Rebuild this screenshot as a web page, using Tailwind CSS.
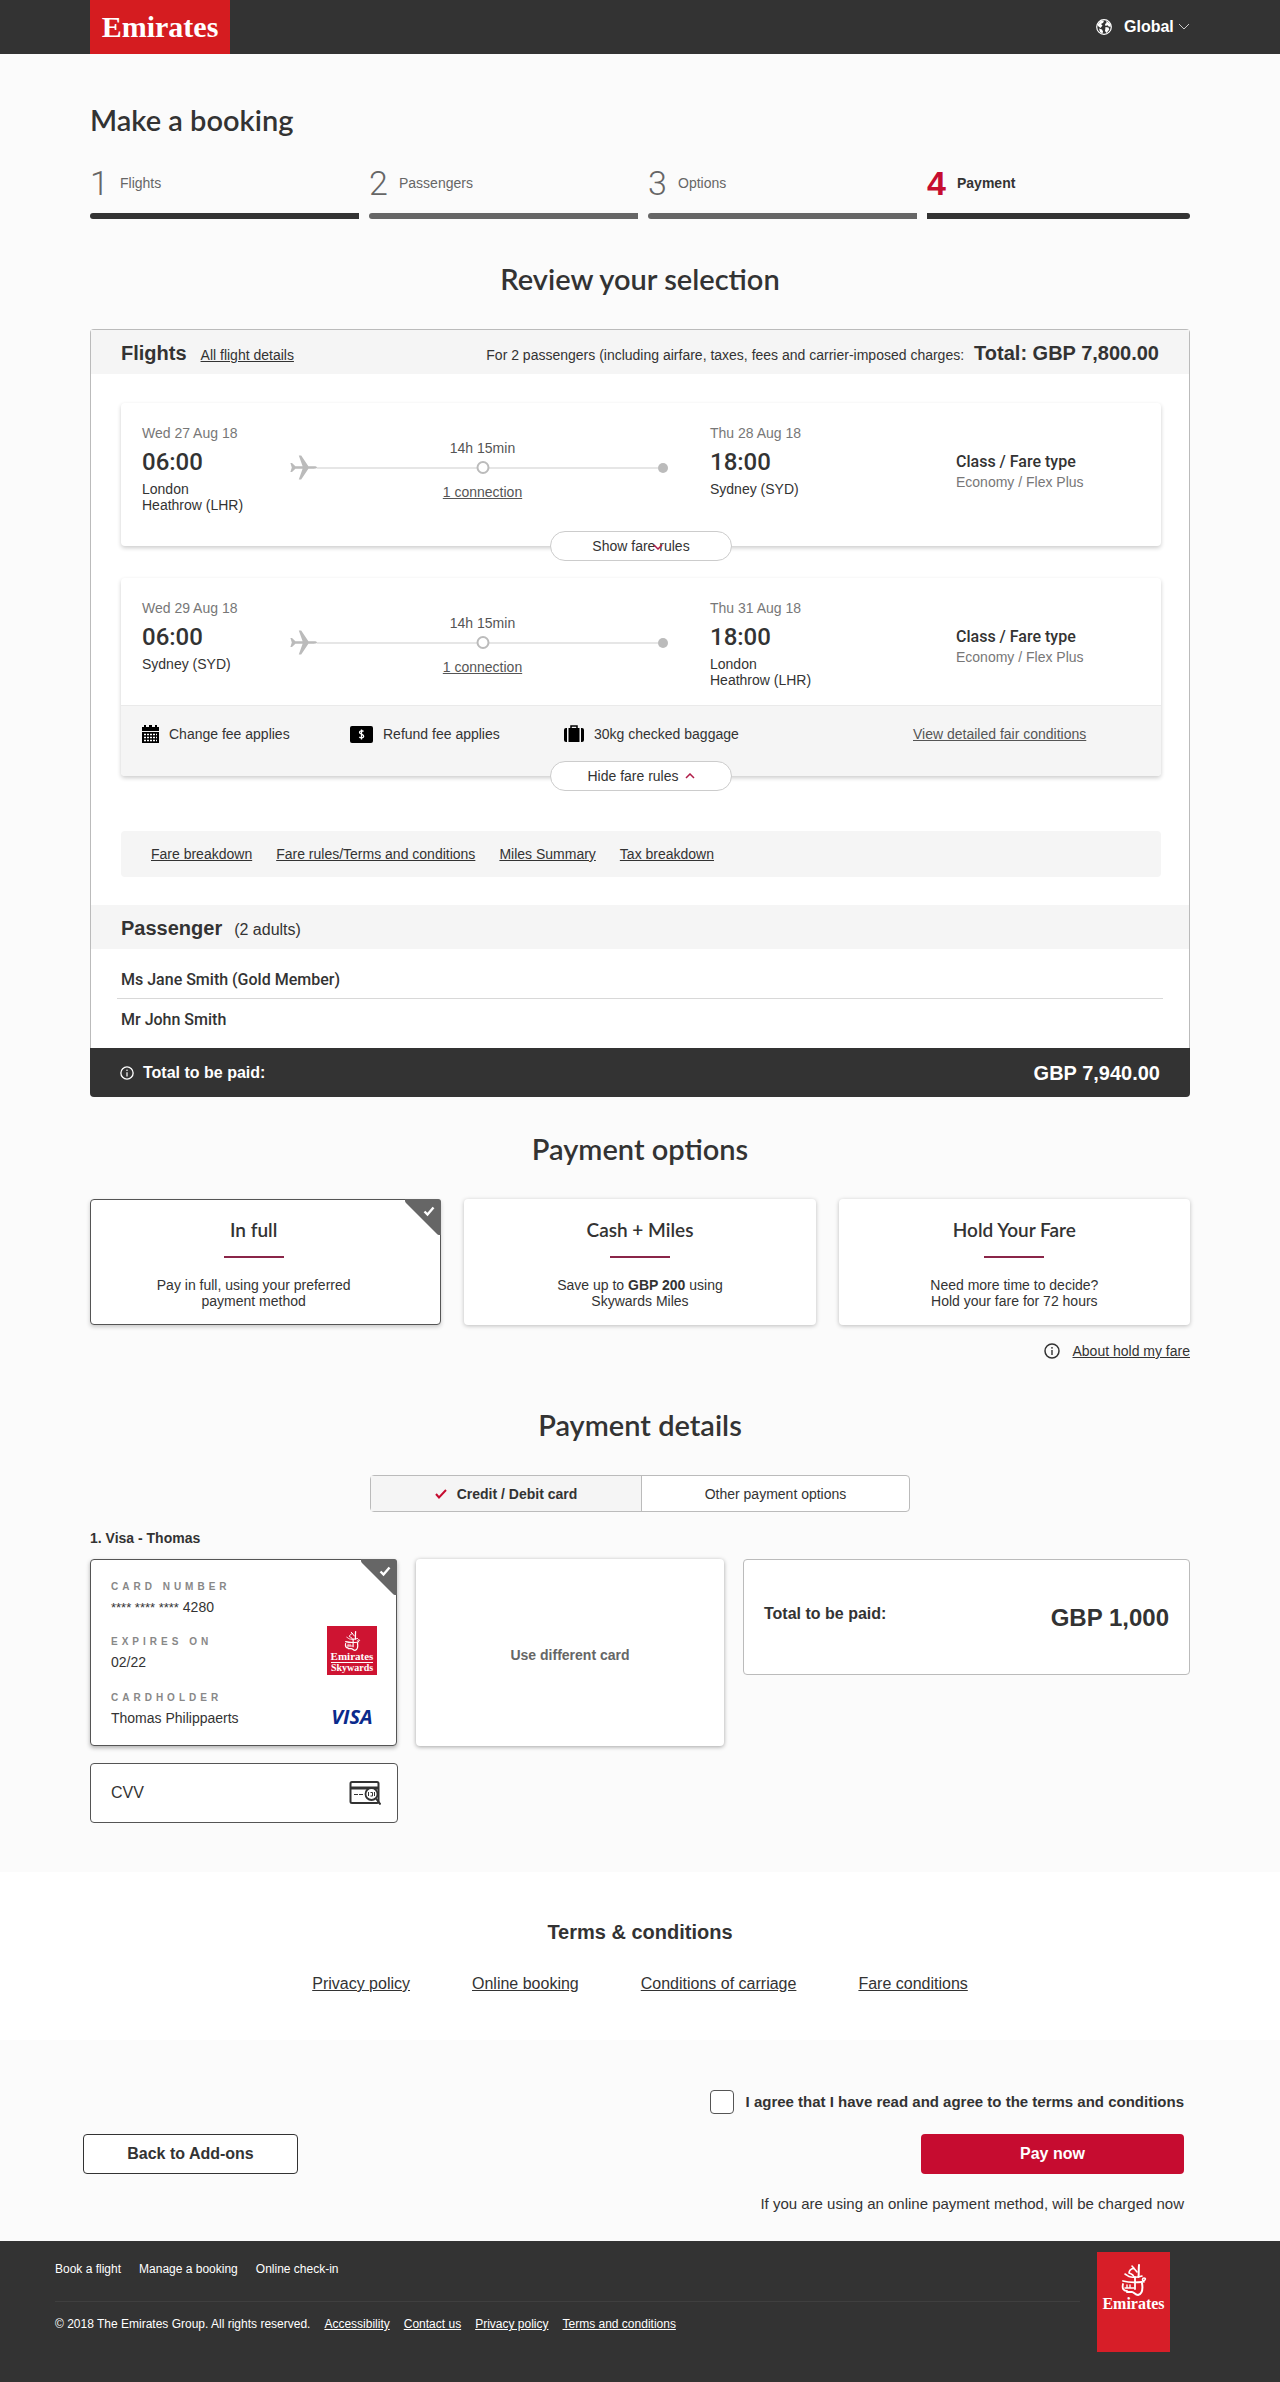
<!DOCTYPE html>
<html lang="en">

<head>
    <meta charset="UTF-8">
    <meta name="viewport" content="width=device-width, initial-scale=1.0">
    <script src="https://cdn.jsdelivr.net/npm/@tailwindcss/browser@4"></script>
    <title>Make a booking - Payment</title>
</head>

<body class="bg-[#fbfbfb] text-[#333] text-sm leading-5 font-['Liberation_Sans',Arial,sans-serif]">

    <!-- Shared icons -->
    <svg class="hidden" aria-hidden="true">
        <symbol id="icon-plane" viewBox="0 0 27 25">
            <path fill="#bbb" d="M27 12.5c0 .8-1.4 1.2-3 1.2h-5.6L11.2 24.6H8.8l3.8-10.9H5.4L2 17H.4l1.4-4.5L.4 8H2l3.4 3.3h7.2L8.8.4h2.4l7.2 10.9H24c1.6 0 3 .4 3 1.2z" />
        </symbol>
        <symbol id="icon-info" viewBox="0 0 16 16">
            <circle cx="8" cy="8" r="7" fill="none" stroke="currentColor" stroke-width="1.5" />
            <path d="M8 7v5" stroke="currentColor" stroke-width="1.4" />
            <circle cx="8" cy="4.8" r=".9" fill="currentColor" />
        </symbol>
        <symbol id="icon-corner" viewBox="0 0 36 36">
            <path fill="#666" d="M0 0h33a3 3 0 0 1 3 3v33h-2a3 3 0 0 1-2-1L1 4a3 3 0 0 1-1-2z" />
            <path d="M19.5 12.5l3 3 6-7" fill="none" stroke="#fff" stroke-width="2.4" />
        </symbol>
        <symbol id="icon-calligraphy" viewBox="0 0 26 32">
            <g fill="none" stroke="#fff" stroke-linecap="round" stroke-linejoin="round">
                <path stroke-width="2" d="M18 1c-.5 4 0 8-.5 12" />
                <path stroke-width="1.6" d="M11 2l5 6M13 4c-3 1-5 3-5 5 2 1 4 1 5 4" />
                <path stroke-width="1.6" d="M4 10c2 1 3 3 6 3 3 .5 8 0 11-1M22 17c3-1 3-3 1-3s-2 3 0 4" />
                <path stroke-width="1.8" d="M2 17c5 1.500 13 1.500 19 1M2 20c-1 4 0 7 4 7M14 13v12" />
                <path stroke-width="1.4" d="M6 21v3M9 21v3M4 24h9" />
                <path stroke-width="2" d="M6 28h5c2 0 3 3 6 3 4-1 5-6 4-12" />
            </g>
        </symbol>
    </svg>

    <!-- Header -->
    <header class="bg-[#333]">
        <div class="mx-auto max-w-[1100px] flex items-center justify-between">
            <a href="#" class="w-[140px] h-[54px] bg-[#d51c20] text-white text-[30px] leading-[54px] font-bold text-center font-['Liberation_Serif',serif]">Emirates</a>
            <div class="flex items-center gap-3 text-white">
                <svg class="size-4" viewBox="0 0 16 16" aria-hidden="true">
                    <circle cx="8" cy="8" r="7.300" fill="#333" stroke="#fff" stroke-width="1.200" />
                    <path fill="#fff" d="M2 5l3-3.500 3 .2-.8 2L5 5l1.500 1.500L4.500 9 2 7zM10 2l3.500 2L15 7.500l-2 .2-1.500-1.500L9.500 7 9 5l1.500-1zM9.500 8l3 .5.8 2-2.800 3.500-1.500-2zM3 9.500l3 1 1 2-.5 2L4 13z" />
                </svg>
                <div class="relative">
                    <select aria-label="Region" class="appearance-none bg-transparent text-white text-base font-bold leading-6 pr-4">
                        <option>Global</option>
                    </select>
                    <svg class="absolute right-0 top-2 w-3 h-2 pointer-events-none" viewBox="0 0 12 8" fill="none" stroke="#ccc" aria-hidden="true">
                        <path d="M1 1l5 5 5-5" />
                    </svg>
                </div>
            </div>
        </div>
    </header>

    <main class="mx-auto max-w-[1100px] pt-[46px] pb-[49px]">
        <h1 class="font-[Lato,sans-serif] text-[29px] leading-10 font-semibold">Make a booking</h1>

        <!-- Steps -->
        <ol class="mt-[23px] grid grid-cols-[269fr_269fr_269fr_263fr] gap-[10px] text-[#666]">
            <li>
                <div class="flex items-center h-10">
                    <span class="w-[30px] text-[34px] font-light font-[Roboto,sans-serif]">1</span>
                    <span>Flights</span>
                </div>
                <div class="mt-[10px] h-[6px] rounded-l-full bg-[#333]"></div>
            </li>
            <li>
                <div class="flex items-center h-10">
                    <span class="w-[30px] text-[34px] font-light font-[Roboto,sans-serif]">2</span>
                    <span>Passengers</span>
                </div>
                <div class="mt-[10px] h-[6px] rounded-l-full bg-[#666]"></div>
            </li>
            <li>
                <div class="flex items-center h-10">
                    <span class="w-[30px] text-[34px] font-light font-[Roboto,sans-serif]">3</span>
                    <span>Options</span>
                </div>
                <div class="mt-[10px] h-[6px] rounded-l-full bg-[#666]"></div>
            </li>
            <li class="font-bold text-[#333]" aria-current="step">
                <div class="flex items-center h-10">
                    <span class="w-[30px] text-[34px] text-[#c60c30]">4</span>
                    <span>Payment</span>
                </div>
                <div class="mt-[10px] h-[6px] rounded-r-full bg-[#333]"></div>
            </li>
        </ol>

        <h2 class="mt-10 text-center font-[Lato,sans-serif] text-[29px] leading-10 font-semibold">Review your selection</h2>

        <!-- Selection -->
        <section class="mt-[30px] bg-white border border-b-0 border-[#bbb] rounded-t-sm">
            <div class="flex items-baseline h-11 pt-[9px] px-[30px] bg-[#f5f5f5]">
                <h3 class="text-xl leading-7 font-bold">Flights</h3>
                <a href="#" class="ml-[14px] underline">All flight details</a>
                <p class="ml-auto">For 2 passengers (including airfare, taxes, fees and carrier-imposed charges:</p>
                <p class="ml-[10px] text-xl leading-7 font-bold">Total: GBP 7,800.00</p>
            </div>

            <div class="pt-[29px] pb-7 pl-[30px] pr-7">
                <!-- Outbound -->
                <article class="relative rounded-sm shadow-[0_2px_4px_rgba(0,0,0,0.2)]">
                    <div class="grid grid-cols-[148fr_420fr_246fr_205fr] pl-[21px] pt-5 pb-[33px]">
                        <div>
                            <p class="text-[#777]">Wed 27 Aug 18</p>
                            <p class="mt-[3px] text-2xl font-medium font-[Roboto,sans-serif]">06:00</p>
                            <p class="mt-[3px] leading-4">London<br>Heathrow (LHR)</p>
                        </div>
                        <div class="pt-[18px] pr-[35px] text-center">
                            <p class="leading-[14px] text-[#555]">14h 15min</p>
                            <div class="relative flex items-center pr-[7px]">
                                <svg class="w-[27px] h-[25px]" aria-hidden="true"><use href="#icon-plane" /></svg>
                                <span class="flex-1 h-[2px] bg-[#e6e6e6]"></span>
                                <span class="size-[10px] rounded-full bg-[#bbb]"></span>
                                <span class="absolute left-1/2 -translate-x-1/2 size-[13px] rounded-full border-2 border-[#bbb] bg-white"></span>
                            </div>
                            <a href="#" class="block mt-[2px] text-[#555] underline">1 connection</a>
                        </div>
                        <div>
                            <p class="text-[#777]">Thu 28 Aug 18</p>
                            <p class="mt-[3px] text-2xl font-medium font-[Roboto,sans-serif]">18:00</p>
                            <p class="mt-[3px] leading-4">Sydney (SYD)</p>
                        </div>
                        <div class="pt-[29px]">
                            <p class="text-base leading-5 font-medium font-[Roboto,sans-serif]">Class / Fare type</p>
                            <p class="text-[#777]">Economy / Flex Plus</p>
                        </div>
                    </div>
                    <button type="button" class="absolute bottom-0 left-1/2 -translate-x-1/2 translate-y-1/2 w-[182px] h-[30px] rounded-full border border-[#ccc] bg-white">
                        Show fare rules
                        <svg class="absolute left-[102px] top-3 w-[10px] h-[6px]" viewBox="0 0 10 6" fill="none" stroke="#b01c48" stroke-width="1.500" aria-hidden="true">
                            <path d="M1 1l4 4 4-4" />
                        </svg>
                    </button>
                </article>

                <!-- Return -->
                <article class="relative mt-8 rounded-sm shadow-[0_2px_4px_rgba(0,0,0,0.2)]">
                    <div class="grid grid-cols-[148fr_420fr_246fr_205fr] pl-[21px] pt-5 pb-[17px]">
                        <div>
                            <p class="text-[#777]">Wed 29 Aug 18</p>
                            <p class="mt-[3px] text-2xl font-medium font-[Roboto,sans-serif]">06:00</p>
                            <p class="mt-[3px] leading-4">Sydney (SYD)</p>
                        </div>
                        <div class="pt-[18px] pr-[35px] text-center">
                            <p class="leading-[14px] text-[#555]">14h 15min</p>
                            <div class="relative flex items-center pr-[7px]">
                                <svg class="w-[27px] h-[25px]" aria-hidden="true"><use href="#icon-plane" /></svg>
                                <span class="flex-1 h-[2px] bg-[#e6e6e6]"></span>
                                <span class="size-[10px] rounded-full bg-[#bbb]"></span>
                                <span class="absolute left-1/2 -translate-x-1/2 size-[13px] rounded-full border-2 border-[#bbb] bg-white"></span>
                            </div>
                            <a href="#" class="block mt-[2px] text-[#555] underline">1 connection</a>
                        </div>
                        <div>
                            <p class="text-[#777]">Thu 31 Aug 18</p>
                            <p class="mt-[3px] text-2xl font-medium font-[Roboto,sans-serif]">18:00</p>
                            <p class="mt-[3px] leading-4">London<br>Heathrow (LHR)</p>
                        </div>
                        <div class="pt-[29px]">
                            <p class="text-base leading-5 font-medium font-[Roboto,sans-serif]">Class / Fare type</p>
                            <p class="text-[#777]">Economy / Flex Plus</p>
                        </div>
                    </div>
                    <div class="grid grid-cols-[208fr_214fr_349fr_248fr] h-[71px] pl-[21px] pt-[18px] bg-[#f5f5f5] border-t border-[#eaeaea] rounded-b-sm">
                        <p class="flex items-center h-5 gap-[10px]">
                            <svg class="w-[17px] h-[18px]" viewBox="0 0 17 18" aria-hidden="true">
                                <path d="M0 2h2V0h2v2h3V0h3v2h3V0h2v2h2v4H0zM0 7h17v11H0z" />
                                <path stroke="#fff" d="M2 9.500h13M2 12.500h13M2 15.500h13" stroke-width="1.500" stroke-dasharray="2 1" />
                            </svg>
                            Change fee applies
                        </p>
                        <p class="flex items-center h-5 gap-[10px]">
                            <svg class="w-[23px] h-[17px]" viewBox="0 0 23 17" aria-hidden="true">
                                <rect width="23" height="17" rx="2" />
                                <path d="M13.500 5.500c-1-1.200-4-1-4 .8 0 2.200 4.200 1.600 4.200 3.900 0 2-3.200 2.200-4.400.8M11.500 3.500v10" fill="none" stroke="#fff" stroke-width="1.300" />
                            </svg>
                            Refund fee applies
                        </p>
                        <p class="flex items-center h-5 gap-[10px]">
                            <svg class="w-5 h-[18px]" viewBox="0 0 20 18" aria-hidden="true">
                                <path d="M2 3h1v14H2a2 2 0 0 1-2-2V5a2 2 0 0 1 2-2zM17 3h1a2 2 0 0 1 2 2v10a2 2 0 0 1-2 2h-1zM4.500 3h11v14h-11z" />
                                <path d="M7 3V1h6v2" fill="none" stroke="#000" stroke-width="1.500" />
                            </svg>
                            30kg checked baggage
                        </p>
                        <a href="#" class="justify-self-start self-start text-[#555] underline">View detailed fair conditions</a>
                    </div>
                    <button type="button" class="absolute bottom-0 left-1/2 -translate-x-1/2 translate-y-1/2 flex items-center justify-center gap-[6px] w-[182px] h-[30px] rounded-full border border-[#ccc] bg-white">
                        Hide fare rules
                        <svg class="w-[10px] h-[6px]" viewBox="0 0 10 6" fill="none" stroke="#b01c48" stroke-width="1.500" aria-hidden="true">
                            <path d="M1 5l4-4 4 4" />
                        </svg>
                    </button>
                </article>

                <nav class="mt-[55px] flex items-center gap-6 h-[46px] pl-[30px] rounded-sm bg-[#f5f5f5]">
                    <a href="#" class="underline">Fare breakdown</a>
                    <a href="#" class="underline">Fare rules/Terms and conditions</a>
                    <a href="#" class="underline">Miles Summary</a>
                    <a href="#" class="underline">Tax breakdown</a>
                </nav>
            </div>

            <div class="flex items-baseline gap-3 h-11 pt-[9px] pl-[30px] bg-[#f5f5f5]">
                <h3 class="text-xl leading-7 font-bold">Passenger</h3>
                <p class="text-base">(2 adults)</p>
            </div>
            <ul class="px-[26px] text-base leading-5 font-medium font-[Roboto,sans-serif]">
                <li class="pt-[21px] pb-2 px-1 border-b border-[#d8d8d8]">Ms Jane Smith (Gold Member)</li>
                <li class="pt-[11px] pb-[18px] px-1">Mr John Smith</li>
            </ul>
        </section>
        <div class="flex items-center h-[49px] px-[30px] rounded-b-sm bg-[#333] text-white font-bold">
            <svg class="size-[14px]" aria-hidden="true"><use href="#icon-info" /></svg>
            <span class="ml-[9px] text-base">Total to be paid:</span>
            <span class="ml-auto text-xl">GBP 7,940.00</span>
        </div>

        <!-- Payment options -->
        <h2 class="mt-8 text-center font-[Lato,sans-serif] text-[29px] leading-10 font-semibold">Payment options</h2>
        <div class="mt-[30px] grid grid-cols-3 gap-[23px] text-center">
            <label class="relative h-[126px] pt-[18px] pr-6 rounded-sm border border-[#555] bg-white shadow-[0_2px_4px_rgba(0,0,0,0.2)]">
                <input type="radio" name="option" class="sr-only" checked>
                <span class="block font-[Lato,sans-serif] text-[19px] leading-6 font-semibold">In full</span>
                <span class="block mx-auto mt-[14px] w-[60px] h-[2px] bg-[#8a2548]"></span>
                <span class="block mt-[19px] leading-4">Pay in full, using your preferred<br>payment method</span>
                <svg class="absolute -top-px -right-px size-9" aria-hidden="true"><use href="#icon-corner" /></svg>
            </label>
            <label class="relative h-[126px] pt-[19px] rounded-sm bg-white shadow-[0_1px_4px_rgba(0,0,0,0.25)]">
                <input type="radio" name="option" class="sr-only">
                <span class="block font-[Lato,sans-serif] text-[19px] leading-6 font-semibold">Cash + Miles</span>
                <span class="block mx-auto mt-[14px] w-[60px] h-[2px] bg-[#8a2548]"></span>
                <span class="block mt-[19px] leading-4">Save up to <b>GBP 200</b> using<br>Skywards Miles</span>
            </label>
            <label class="relative h-[126px] pt-[19px] rounded-sm bg-white shadow-[0_1px_4px_rgba(0,0,0,0.25)]">
                <input type="radio" name="option" class="sr-only">
                <span class="block font-[Lato,sans-serif] text-[19px] leading-6 font-semibold">Hold Your Fare</span>
                <span class="block mx-auto mt-[14px] w-[60px] h-[2px] bg-[#8a2548]"></span>
                <span class="block mt-[19px] leading-4">Need more time to decide?<br>Hold your fare for 72 hours</span>
            </label>
        </div>
        <div class="mt-4 flex items-center justify-end gap-3">
            <svg class="size-4" aria-hidden="true"><use href="#icon-info" /></svg>
            <a href="#" class="underline">About hold my fare</a>
        </div>

        <!-- Payment details -->
        <h2 class="mt-11 text-center font-[Lato,sans-serif] text-[29px] leading-10 font-semibold">Payment details</h2>
        <div class="mt-[30px] mx-auto w-[540px] h-[37px] grid grid-cols-[272fr_268fr] rounded-sm border border-[#bbb] bg-white">
            <button type="button" class="flex items-center justify-center gap-[10px] border-r border-[#bbb] bg-[#f5f5f5] font-bold">
                <svg class="w-3 h-[10px]" viewBox="0 0 12 10" fill="none" stroke="#c60c30" stroke-width="2" aria-hidden="true">
                    <path d="M1 5l3 3.500L11 1" />
                </svg>
                Credit / Debit card
            </button>
            <button type="button">Other payment options</button>
        </div>

        <h3 class="mt-4 font-bold">1. Visa - Thomas</h3>
        <div class="mt-[11px] grid grid-cols-[307fr_308fr_447fr] items-start gap-[19px]">
            <div class="relative flex justify-between h-[187px] pt-5 pl-5 pr-[19px] rounded border border-[#555] bg-white shadow-[0_2px_4px_rgba(0,0,0,0.3)]">
                <dl>
                    <dt class="text-[10px] leading-[14px] font-bold tracking-[4px] text-[#888]">CARD NUMBER</dt>
                    <dd class="mt-[3px]"><span class="text-[13px]">**** **** ****</span> 4280</dd>
                    <dt class="mt-[17px] text-[10px] leading-[14px] font-bold tracking-[4px] text-[#888]">EXPIRES ON</dt>
                    <dd class="mt-[3px]">02/22</dd>
                    <dt class="mt-[19px] text-[10px] leading-[14px] font-bold tracking-[4px] text-[#888]">CARDHOLDER</dt>
                    <dd class="mt-[3px]">Thomas Philippaerts</dd>
                </dl>
                <div class="pt-[46px] text-center">
                    <div class="w-[50px] h-[49px] pt-[5px] bg-[#ce1432] text-white text-[11px] leading-[10px] font-bold font-['Liberation_Serif',serif]">
                        <svg class="mx-auto w-[17px] h-5" aria-hidden="true"><use href="#icon-calligraphy" /></svg>
                        <p>Emirates</p>
                        <p class="mx-1 mt-px border-t border-white text-[10px]">Skywards</p>
                    </div>
                    <p class="mt-[30px] text-[20px] leading-6 font-bold italic text-[#0a2a8c] font-['Open_Sans',sans-serif]">VISA</p>
                </div>
                <svg class="absolute -top-px -right-px size-9" aria-hidden="true"><use href="#icon-corner" /></svg>
            </div>
            <button type="button" class="h-[187px] pt-1 rounded bg-white font-bold text-[#666] shadow-[0_1px_4px_rgba(0,0,0,0.35)]">Use different card</button>
            <div class="flex justify-between h-[116px] pt-[42px] px-5 rounded border border-[#bbb] bg-white font-bold">
                <p class="text-base">Total to be paid:</p>
                <p class="text-2xl">GBP 1,000</p>
            </div>
        </div>
        <div class="mt-[17px] w-[308px] h-[60px] flex items-center gap-3 pl-5 pr-4 rounded-sm border border-[#555] bg-white">
            <label for="cvv" class="text-base">CVV</label>
            <input id="cvv" type="text" class="flex-1 min-w-0 h-full text-base outline-none">
            <svg class="w-8 h-6" viewBox="0 0 32 24" fill="none" stroke="#333" aria-hidden="true">
                <rect x="1.500" y="1" width="28" height="21" rx="1.500" stroke-width="2" />
                <path stroke-width="3" d="M2 7h27" />
                <path stroke-width="1.200" d="M5 13.500h10" stroke-dasharray="4 1" />
                <circle cx="22.500" cy="13" r="6" stroke-width="1.800" fill="#fff" />
                <path stroke-width="2" d="M27 17.500l4.500 6" />
                <path stroke-width="1" d="M19.500 11v4M21.500 11.500h2v3.500h-2M25.500 11v4" />
            </svg>
        </div>
    </main>

    <!-- Terms -->
    <section class="bg-white pt-[46px] pb-11 text-center">
        <h2 class="text-xl leading-7 font-bold">Terms &amp; conditions</h2>
        <nav class="mt-[26px] flex justify-center gap-[62px] text-base">
            <a href="#" class="underline">Privacy policy</a>
            <a href="#" class="underline">Online booking</a>
            <a href="#" class="underline">Conditions of carriage</a>
            <a href="#" class="underline">Fare conditions</a>
        </nav>
    </section>

    <form class="mx-auto max-w-[1114px] pt-[50px] pb-[27px] pr-[13px]">
        <div class="flex items-center justify-end gap-3">
            <input id="agree" type="checkbox" class="appearance-none size-6 rounded-sm border border-[#555] bg-white">
            <label for="agree" class="text-[15px] font-bold">I agree that I have read and agree to the terms and conditions</label>
        </div>
        <div class="mt-5 flex justify-between text-base font-bold">
            <button type="button" class="w-[215px] h-10 rounded-sm border border-[#333] bg-white">Back to Add-ons</button>
            <button type="submit" class="w-[263px] h-10 rounded-sm bg-[#c60c30] text-white">Pay now</button>
        </div>
        <p class="mt-5 text-right text-[15px]">If you are using an online payment method, will be charged now</p>
    </form>

    <!-- Footer -->
    <footer class="flex items-start gap-[17px] h-[141px] pl-[55px] pr-[110px] pt-[11px] bg-[#333] text-white text-xs">
        <div class="flex-1 pt-[9px]">
            <nav class="flex gap-[18px]">
                <a href="#">Book a flight</a>
                <a href="#">Manage a booking</a>
                <a href="#">Online check-in</a>
            </nav>
            <div class="mt-6 pt-[14px] flex gap-[14px] border-t border-[#3f3f3f]">
                <p>© 2018 The Emirates Group. All rights reserved.</p>
                <a href="#" class="underline">Accessibility</a>
                <a href="#" class="underline">Contact us</a>
                <a href="#" class="underline">Privacy policy</a>
                <a href="#" class="underline">Terms and conditions</a>
            </div>
        </div>
        <a href="#" class="w-[73px] h-[100px] pt-3 bg-[#d71e28] text-center text-base leading-4 font-bold font-['Liberation_Serif',serif]">
            <svg class="mx-auto w-[26px] h-8" aria-hidden="true"><use href="#icon-calligraphy" /></svg>
            Emirates
        </a>
    </footer>
</body>

</html>
